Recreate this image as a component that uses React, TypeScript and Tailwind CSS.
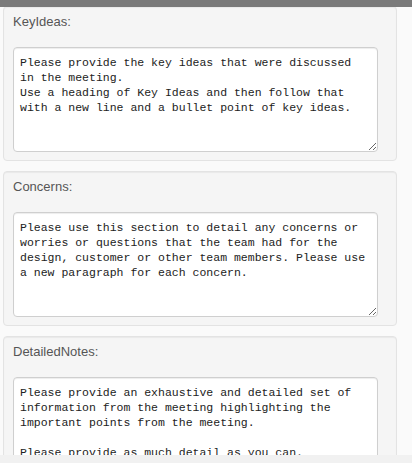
import React from "react";

const sections = [
  {
    label: "KeyIdeas:",
    text: "Please provide the key ideas that were discussed\nin the meeting.\nUse a heading of Key Ideas and then follow that\nwith a new line and a bullet point of key ideas.",
  },
  {
    label: "Concerns:",
    text: "Please use this section to detail any concerns or\nworries or questions that the team had for the\ndesign, customer or other team members. Please use\na new paragraph for each concern.",
  },
  {
    label: "DetailedNotes:",
    text: "Please provide an exhaustive and detailed set of\ninformation from the meeting highlighting the\nimportant points from the meeting.\n\nPlease provide as much detail as you can.",
  },
];

function Section({ label, text }: { label: string; text: string }) {
  return (
    <div className="w-[394px] shrink-0 rounded-[4px] border border-[#e3e3e3] bg-[#f5f5f5] pl-[9px] pt-[5px] pb-[8px] shadow-[inset_0_1px_1px_rgba(0,0,0,0.05)]">
      <div className="mb-[15px] h-[20px] text-[13px] leading-[20px] text-[#555] [font-family:'Liberation_Sans',Arial,sans-serif]">
        {label}
      </div>
      <textarea
        readOnly
        defaultValue={text}
        className="block h-[105px] w-[365px] resize overflow-hidden rounded-[4px] border border-[#cfcfcf] bg-white px-[6px] pt-[7px] text-[11.5px] leading-[15px] whitespace-pre-wrap text-[#222] shadow-[inset_0_1px_1px_rgba(0,0,0,0.075)] outline-none [font-family:'Liberation_Mono',monospace]"
      />
    </div>
  );
}

export default function App() {
  return (
    <div className="flex h-[463px] w-[412px] flex-col overflow-hidden bg-[#fafafa]">
      <div className="relative z-10 h-[7px] shrink-0 bg-[#7a7a7a]" />
      <div className="-mt-px flex min-h-0 flex-1 flex-col gap-[10px] overflow-hidden pl-[3px]">
        {sections.map((s) => (
          <Section key={s.label} label={s.label} text={s.text} />
        ))}
      </div>
      <div className="h-[8px] shrink-0 bg-[#f1f1f1]" />
    </div>
  );
}
